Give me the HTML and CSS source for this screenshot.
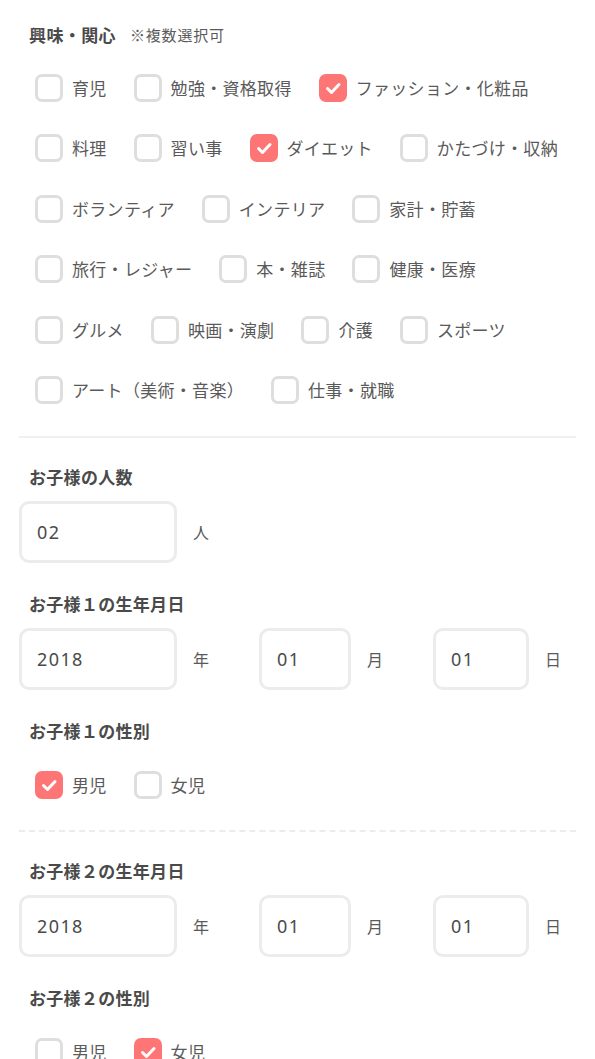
FILE: index.html
```html
<!DOCTYPE html>
<html lang="ja">
<head>
<meta charset="utf-8">
<title>プロフィール</title>
<link rel="stylesheet" href="styles.css">
</head>
<body>
<main class="page">
  <section class="interest">
    <h2 class="interest-title">興味・関心<span class="note">※複数選択可</span></h2>
    <div class="choices">
      <div class="choice-row">
        <label class="choice"><span class="box"></span><span class="text">育児</span></label>
        <label class="choice"><span class="box"></span><span class="text">勉強・資格取得</span></label>
        <label class="choice"><span class="box on"><svg viewBox="0 0 28 28"><path d="M8.5 14.5l4 4 7.5-8"/></svg></span><span class="text">ファッション・化粧品</span></label>
      </div>
      <div class="choice-row">
        <label class="choice"><span class="box"></span><span class="text">料理</span></label>
        <label class="choice"><span class="box"></span><span class="text">習い事</span></label>
        <label class="choice"><span class="box on"><svg viewBox="0 0 28 28"><path d="M8.5 14.5l4 4 7.5-8"/></svg></span><span class="text">ダイエット</span></label>
        <label class="choice"><span class="box"></span><span class="text">かたづけ・収納</span></label>
      </div>
      <div class="choice-row">
        <label class="choice"><span class="box"></span><span class="text">ボランティア</span></label>
        <label class="choice"><span class="box"></span><span class="text">インテリア</span></label>
        <label class="choice"><span class="box"></span><span class="text">家計・貯蓄</span></label>
      </div>
      <div class="choice-row">
        <label class="choice"><span class="box"></span><span class="text">旅行・レジャー</span></label>
        <label class="choice"><span class="box"></span><span class="text">本・雑誌</span></label>
        <label class="choice"><span class="box"></span><span class="text">健康・医療</span></label>
      </div>
      <div class="choice-row">
        <label class="choice"><span class="box"></span><span class="text">グルメ</span></label>
        <label class="choice"><span class="box"></span><span class="text">映画・演劇</span></label>
        <label class="choice"><span class="box"></span><span class="text">介護</span></label>
        <label class="choice"><span class="box"></span><span class="text">スポーツ</span></label>
      </div>
      <div class="choice-row">
        <label class="choice"><span class="box"></span><span class="text">アート（美術・音楽）</span></label>
        <label class="choice"><span class="box"></span><span class="text">仕事・就職</span></label>
      </div>
    </div>
  </section>

  <hr class="rule">

  <section class="children">
    <div class="field">
      <h3 class="field-label">お子様の人数</h3>
      <div class="inline">
        <div class="input w-year">02</div><span class="unit">人</span>
      </div>
    </div>

    <div class="field">
      <h3 class="field-label">お子様１の生年月日</h3>
      <div class="date-row">
        <div class="inline"><div class="input w-year">2018</div><span class="unit">年</span></div>
        <div class="inline"><div class="input w-month">01</div><span class="unit">月</span></div>
        <div class="inline"><div class="input w-day">01</div><span class="unit">日</span></div>
      </div>
    </div>

    <div class="field">
      <h3 class="field-label">お子様１の性別</h3>
      <div class="choice-row gender">
        <label class="choice"><span class="box on"><svg viewBox="0 0 28 28"><path d="M8.5 14.5l4 4 7.5-8"/></svg></span><span class="text">男児</span></label>
        <label class="choice"><span class="box"></span><span class="text">女児</span></label>
      </div>
    </div>

    <hr class="dashed">

    <div class="field">
      <h3 class="field-label">お子様２の生年月日</h3>
      <div class="date-row">
        <div class="inline"><div class="input w-year">2018</div><span class="unit">年</span></div>
        <div class="inline"><div class="input w-month">01</div><span class="unit">月</span></div>
        <div class="inline"><div class="input w-day">01</div><span class="unit">日</span></div>
      </div>
    </div>

    <div class="field">
      <h3 class="field-label">お子様２の性別</h3>
      <div class="choice-row gender">
        <label class="choice"><span class="box"></span><span class="text">男児</span></label>
        <label class="choice"><span class="box on"><svg viewBox="0 0 28 28"><path d="M8.5 14.5l4 4 7.5-8"/></svg></span><span class="text">女児</span></label>
      </div>
    </div>
  </section>
</main>
</body>
</html>
```

FILE: styles.css
```css
html, body {
  margin: 0;
  padding: 0;
  background: #ffffff;
}

body {
  font-family: "Noto Sans CJK JP", "Noto Sans", sans-serif;
  color: #5a5a5a;
}

.page {
  padding: 23px 19px 40px;
}

.interest-title {
  margin: 0 0 0 10px;
  font-size: 17px;
  line-height: 24px;
  font-weight: 700;
  letter-spacing: 0.4px;
  color: #4a4a4a;
  display: flex;
  align-items: center;
}

.note {
  margin-left: 14px;
  font-size: 15px;
  font-weight: 400;
  letter-spacing: 0.8px;
  color: #5a5a5a;
}

.choices {
  margin-top: 27px;
  display: flex;
  flex-direction: column;
  row-gap: 32.4px;
  padding-left: 16px;
}

.choice-row {
  display: flex;
  align-items: center;
}

.choice {
  display: flex;
  align-items: center;
  margin-right: 27px;
}

.box {
  box-sizing: border-box;
  width: 28px;
  height: 28px;
  border: 3px solid #dedede;
  border-radius: 7px;
  background: #ffffff;
  flex: none;
  display: flex;
}

.box.on {
  border-color: #fe7575;
  background: #fe7575;
}

.box svg {
  width: 28px;
  height: 28px;
  margin: -3px;
}

.box svg path {
  fill: none;
  stroke: #ffffff;
  stroke-width: 3;
  stroke-linecap: round;
  stroke-linejoin: round;
}

.text {
  margin-left: 9px;
  font-size: 17px;
  line-height: 24px;
  letter-spacing: 0.3px;
  color: #5a5a5a;
  white-space: nowrap;
}

.rule {
  margin: 32px 0 0;
  border: 0;
  height: 2px;
  background: #f0f0f0;
}

.dashed {
  margin: 31px 0 0;
  border: 0;
  border-top: 2px dashed #ececec;
  height: 0;
}

.field {
  margin-top: 29px;
}

.children .field:first-child {
  margin-top: 27px;
}

.dashed + .field {
  margin-top: 27px;
}

.field-label {
  margin: 0 0 0 10px;
  font-size: 17px;
  line-height: 24px;
  font-weight: 700;
  letter-spacing: 0.3px;
  color: #4a4a4a;
}

.inline {
  display: flex;
  align-items: center;
  flex: none;
}

.field-label + .inline,
.field-label + .date-row {
  margin-top: 12px;
}

.field-label + .gender {
  margin-top: 28px;
  padding-left: 16px;
}

.input {
  box-sizing: border-box;
  height: 62px;
  border: 3px solid #ececec;
  border-radius: 10px;
  padding-left: 15px;
  display: flex;
  align-items: center;
  flex: none;
  font-size: 18px;
  letter-spacing: 1.4px;
  color: #4a4a4a;
  font-family: "Noto Sans", "Noto Sans CJK JP", sans-serif;
}

.w-year { width: 158px; }
.w-month { width: 92px; }
.w-day { width: 96px; }

.unit {
  margin-left: 16px;
  font-size: 16px;
  color: #5a5a5a;
}

.date-row {
  display: flex;
  align-items: center;
  column-gap: 50px;
}
```
